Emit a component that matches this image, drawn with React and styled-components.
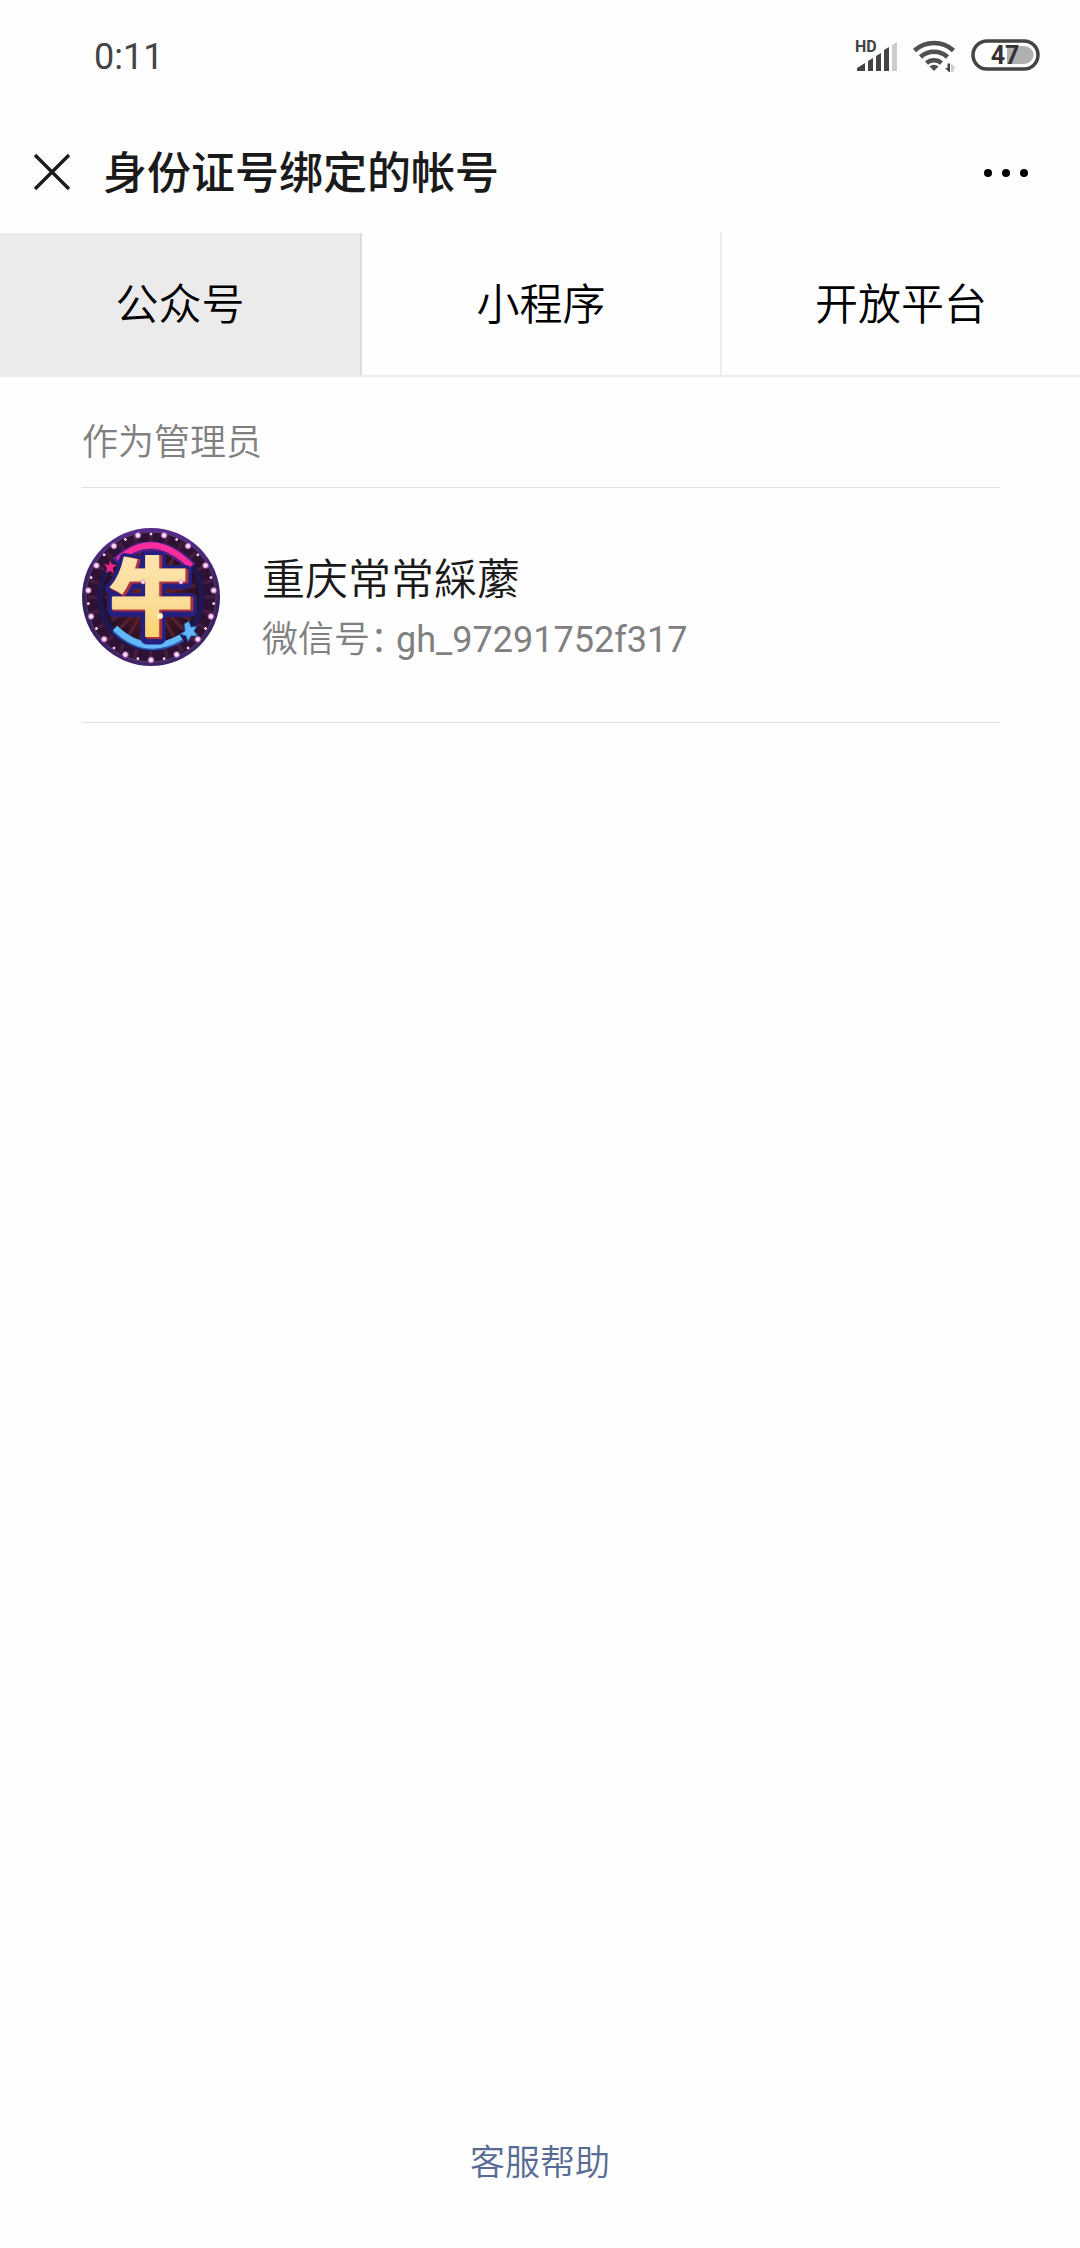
import React, { useState } from "react";
import styled, { createGlobalStyle } from "styled-components";

const GlobalStyle = createGlobalStyle`
  * { box-sizing: border-box; }
  body {
    margin: 0;
    background: #fefefe;
    font-family: Roboto, "Noto Sans CJK SC", sans-serif;
    color: #1a1a1a;
  }
  button { font: inherit; color: inherit; border: 0; background: none; padding: 0; cursor: pointer; }
  svg { display: block; }
`;

const Page = styled.div`
  min-height: 100vh;
  display: flex;
  flex-direction: column;
`;

const StatusBar = styled.div`
  height: 112px;
  padding: 0 40px 0 94px;
  display: flex;
  align-items: center;
  justify-content: space-between;
`;

const Clock = styled.time`
  padding-top: 2px;
  font-size: 36px;
  line-height: 44px;
  color: #444;
`;

const StatusIcons = styled.div`
  display: flex;
  align-items: center;
  gap: 14px;
  padding-bottom: 2px;
`;

const Header = styled.header`
  height: 121px;
  padding: 0 50px 0 32px;
  display: flex;
  align-items: center;
`;

const IconButton = styled.button`
  display: flex;
  align-items: center;
  justify-content: center;
  flex: none;
`;

const Title = styled.h1`
  margin: 0;
  padding: 2px 0 0 31px;
  flex: 1;
  font-size: 44px;
  line-height: 60px;
  font-weight: 500;
`;

const Tabs = styled.div`
  display: grid;
  grid-template-columns: repeat(3, 1fr);
  border-bottom: 2px solid #ececec;
`;

const Tab = styled.button`
  && {
    height: 142px;
    padding-top: 2px;
    background: ${(p) => (p.$selected ? "#ebebeb" : "transparent")};
    border-left: ${(p) => (p.$divided ? "2px solid #ececec" : "0")};
    font-size: 43px;
    line-height: 60px;
    font-weight: 350;
    color: #000;
  }
  &&[aria-selected="true"] + & {
    border-left-color: #dcdcdc;
  }
`;

const Content = styled.main`
  flex: 1;
  padding: 0 80px 0 82px;
`;

const SectionTitle = styled.h2`
  margin: 0;
  padding: 36px 0 14px;
  border-bottom: 1px solid #e2e2e2;
  font-size: 36px;
  line-height: 60px;
  font-weight: 350;
  color: #808080;
`;

const AccountList = styled.ul`
  margin: 0;
  padding: 0;
  list-style: none;
`;

const Account = styled.li`
  display: flex;
  align-items: flex-start;
  gap: 42px;
  padding: 40px 0 52px;
  border-bottom: 1px solid #e2e2e2;
`;

const AccountText = styled.div`
  padding-top: 22px;
`;

const AccountName = styled.div`
  font-size: 43px;
  line-height: 60px;
  font-weight: 350;
`;

const AccountId = styled.div`
  display: flex;
  gap: 8px;
  font-size: 36px;
  line-height: 60px;
  color: #808080;
`;

const IdLabel = styled.span`
  font-weight: 350;
  font-feature-settings: "halt";
`;

const Footer = styled.footer`
  padding-bottom: 54px;
  text-align: center;
`;

const HelpLink = styled.a`
  font-size: 35px;
  line-height: 60px;
  font-weight: 350;
  color: #576b95;
  text-decoration: none;
`;

const Signal = () => (
  <svg width="44" height="34" viewBox="0 0 44 34" fill="#444" aria-hidden="true">
    <text x="0" y="14" fontFamily="Roboto, sans-serif" fontSize="16" fontWeight="700">HD</text>
    <path d="M2 33v-3l8-5v8zM13 33V23l5-3v13zM21 33V18l5-3v18zM29 33V12l5-3v24z" />
    <path d="M37 33V7l5-3v29z" fill="#ccc" />
  </svg>
);

const Wifi = () => (
  <svg width="44" height="34" viewBox="0 0 44 34" aria-hidden="true">
    <g fill="none" stroke="#505050" strokeWidth="4.6">
      <path d="M1.5 12.5a29 29 0 0 1 39 0" />
      <path d="M7.5 19a20 20 0 0 1 27 0" />
      <path d="M13.5 25a11.5 11.5 0 0 1 15 0" />
    </g>
    <path d="M16.5 28.5q4.5-3.6 9 0L21 33z" fill="#505050" />
    <path d="M34.5 25.5h2.5V35l-5-5h2.5z" fill="#444" />
    <path d="M38 35v-9.5l5 5h-2.5V35z" fill="#ccc" />
  </svg>
);

const Battery = () => (
  <svg width="69" height="32" viewBox="0 0 69 32" role="img" aria-label="47">
    <path d="M36 7h17.5a9 9 0 0 1 0 18H36z" fill="#b0b0b0" />
    <rect x="2" y="2" width="65" height="28" rx="14" fill="none" stroke="#444" strokeWidth="3.5" />
    <text x="34" y="25" textAnchor="middle" fontFamily="Roboto, sans-serif" fontSize="25" fontWeight="700" fill="#333">47</text>
  </svg>
);

const CloseIcon = () => (
  <svg width="40" height="40" viewBox="0 0 40 40" fill="none" stroke="#1a1a1a" strokeWidth="3.4" aria-hidden="true">
    <path d="M3 2l34 34M37 2L3 36" />
  </svg>
);

const MoreIcon = () => (
  <svg width="48" height="12" viewBox="0 0 48 12" aria-hidden="true">
    <circle cx="6" cy="6" r="4" />
    <circle cx="24" cy="6" r="4" />
    <circle cx="42" cy="6" r="4" />
  </svg>
);

const bulbs = Array.from({ length: 30 }, (_, i) => {
  const a = ((i * 12 - 90) * Math.PI) / 180;
  return { x: 69 + 63 * Math.cos(a), y: 69 + 63 * Math.sin(a), big: i % 2 === 1 };
});

const rays = Array.from({ length: 24 }, (_, i) => i * 15);

const Avatar = () => (
  <svg width="138" height="138" viewBox="0 0 138 138" role="img" aria-label="牛">
    <defs>
      <linearGradient id="rim" x1="0" y1="0" x2="0" y2="1">
        <stop offset="0" stopColor="#572b8e" />
        <stop offset="0.5" stopColor="#35205a" />
        <stop offset="1" stopColor="#41246b" />
      </linearGradient>
      <radialGradient id="glow">
        <stop offset="0" stopColor="#9a2a08" />
        <stop offset="0.5" stopColor="#4a1522" />
        <stop offset="1" stopColor="#210e27" />
      </radialGradient>
      <linearGradient id="gold" x1="0" y1="0" x2="0" y2="1">
        <stop offset="0" stopColor="#ffe9b8" />
        <stop offset="0.6" stopColor="#fbdc98" />
        <stop offset="1" stopColor="#ffcf5c" />
      </linearGradient>
      <radialGradient id="bulb">
        <stop offset="0" stopColor="#fff" />
        <stop offset="0.5" stopColor="#f7b9ef" />
        <stop offset="1" stopColor="#a04aa0" stopOpacity="0" />
      </radialGradient>
    </defs>
    <circle cx="69" cy="69" r="69" fill="url(#rim)" />
    <circle cx="69" cy="69" r="65" fill="#2e1233" stroke="#53406f" />
    {rays.map((r) => (
      <path key={r} d="M69 69L67 6h4z" fill="#431c40" transform={`rotate(${r} 69 69)`} />
    ))}
    <circle cx="69" cy="69" r="51" fill="url(#glow)" stroke="#211750" strokeWidth="6" />
    {rays.map((r) => (
      <path key={r} d="M69 69L67 23h4z" fill="#6b3040" opacity="0.5" transform={`rotate(${r} 69 69)`} />
    ))}
    {bulbs.map((b, i) => (
      <circle key={i} cx={b.x} cy={b.y} r={b.big ? 4 : 2} fill="url(#bulb)" />
    ))}
    <g fill="none">
      <path d="M34 34Q70 0 110 39" stroke="#54208a" strokeWidth="10" />
      <path d="M36 32Q71 0 109 38" stroke="#ff2d9b" strokeWidth="6" />
      <path d="M33 101Q64 130 100 110" stroke="#2a55a8" strokeWidth="8" />
      <path d="M33 100Q64 130 99 109" stroke="#62b8f8" strokeWidth="6" />
    </g>
    <path d="M28 32l2 4 5 1-4 3 1 5-4-2-4 2 1-5-3-4 5 1z" fill="#e52582" />
    <g fontFamily="Noto Sans CJK SC, sans-serif" fontSize="84" fontWeight="900" textAnchor="middle" strokeLinejoin="round">
      <text x="70" y="102" fill="#20217e" stroke="#252080" strokeWidth="12">牛</text>
      <text x="71" y="101" fill="#a9323d" stroke="#a9323d" strokeWidth="3">牛</text>
      <text x="69" y="100" fill="url(#gold)" stroke="url(#gold)" strokeWidth="1">牛</text>
    </g>
    <path d="M107 93l2 6 6-1-3 5 4 5-7 0-3 6-2-6-6-2 5-3-1-7z" fill="#62b4fa" stroke="#235092" />
    <circle cx="61" cy="54" r="3" fill="url(#bulb)" />
    <circle cx="99" cy="54" r="3" fill="url(#bulb)" />
    <circle cx="78" cy="88" r="3" fill="#fff3cc" />
  </svg>
);

const tabs = ["公众号", "小程序", "开放平台"];

export default function App() {
  const [active, setActive] = useState(0);
  return (
    <Page>
      <GlobalStyle />
      <StatusBar>
        <Clock>0:11</Clock>
        <StatusIcons>
          <Signal />
          <Wifi />
          <Battery />
        </StatusIcons>
      </StatusBar>
      <Header>
        <IconButton type="button" aria-label="关闭"><CloseIcon /></IconButton>
        <Title>身份证号绑定的帐号</Title>
        <IconButton type="button" aria-label="更多"><MoreIcon /></IconButton>
      </Header>
      <Tabs role="tablist">
        {tabs.map((name, i) => (
          <Tab
            key={name}
            type="button"
            role="tab"
            aria-selected={i === active}
            $selected={i === active}
            $divided={i > 0}
            onClick={() => setActive(i)}
          >
            {name}
          </Tab>
        ))}
      </Tabs>
      <Content>
        <SectionTitle>作为管理员</SectionTitle>
        <AccountList>
          <Account>
            <Avatar />
            <AccountText>
              <AccountName>重庆常常綵䕷</AccountName>
              <AccountId>
                <IdLabel>微信号：</IdLabel>
                <span>gh_97291752f317</span>
              </AccountId>
            </AccountText>
          </Account>
        </AccountList>
      </Content>
      <Footer>
        <HelpLink href="#help">客服帮助</HelpLink>
      </Footer>
    </Page>
  );
}
